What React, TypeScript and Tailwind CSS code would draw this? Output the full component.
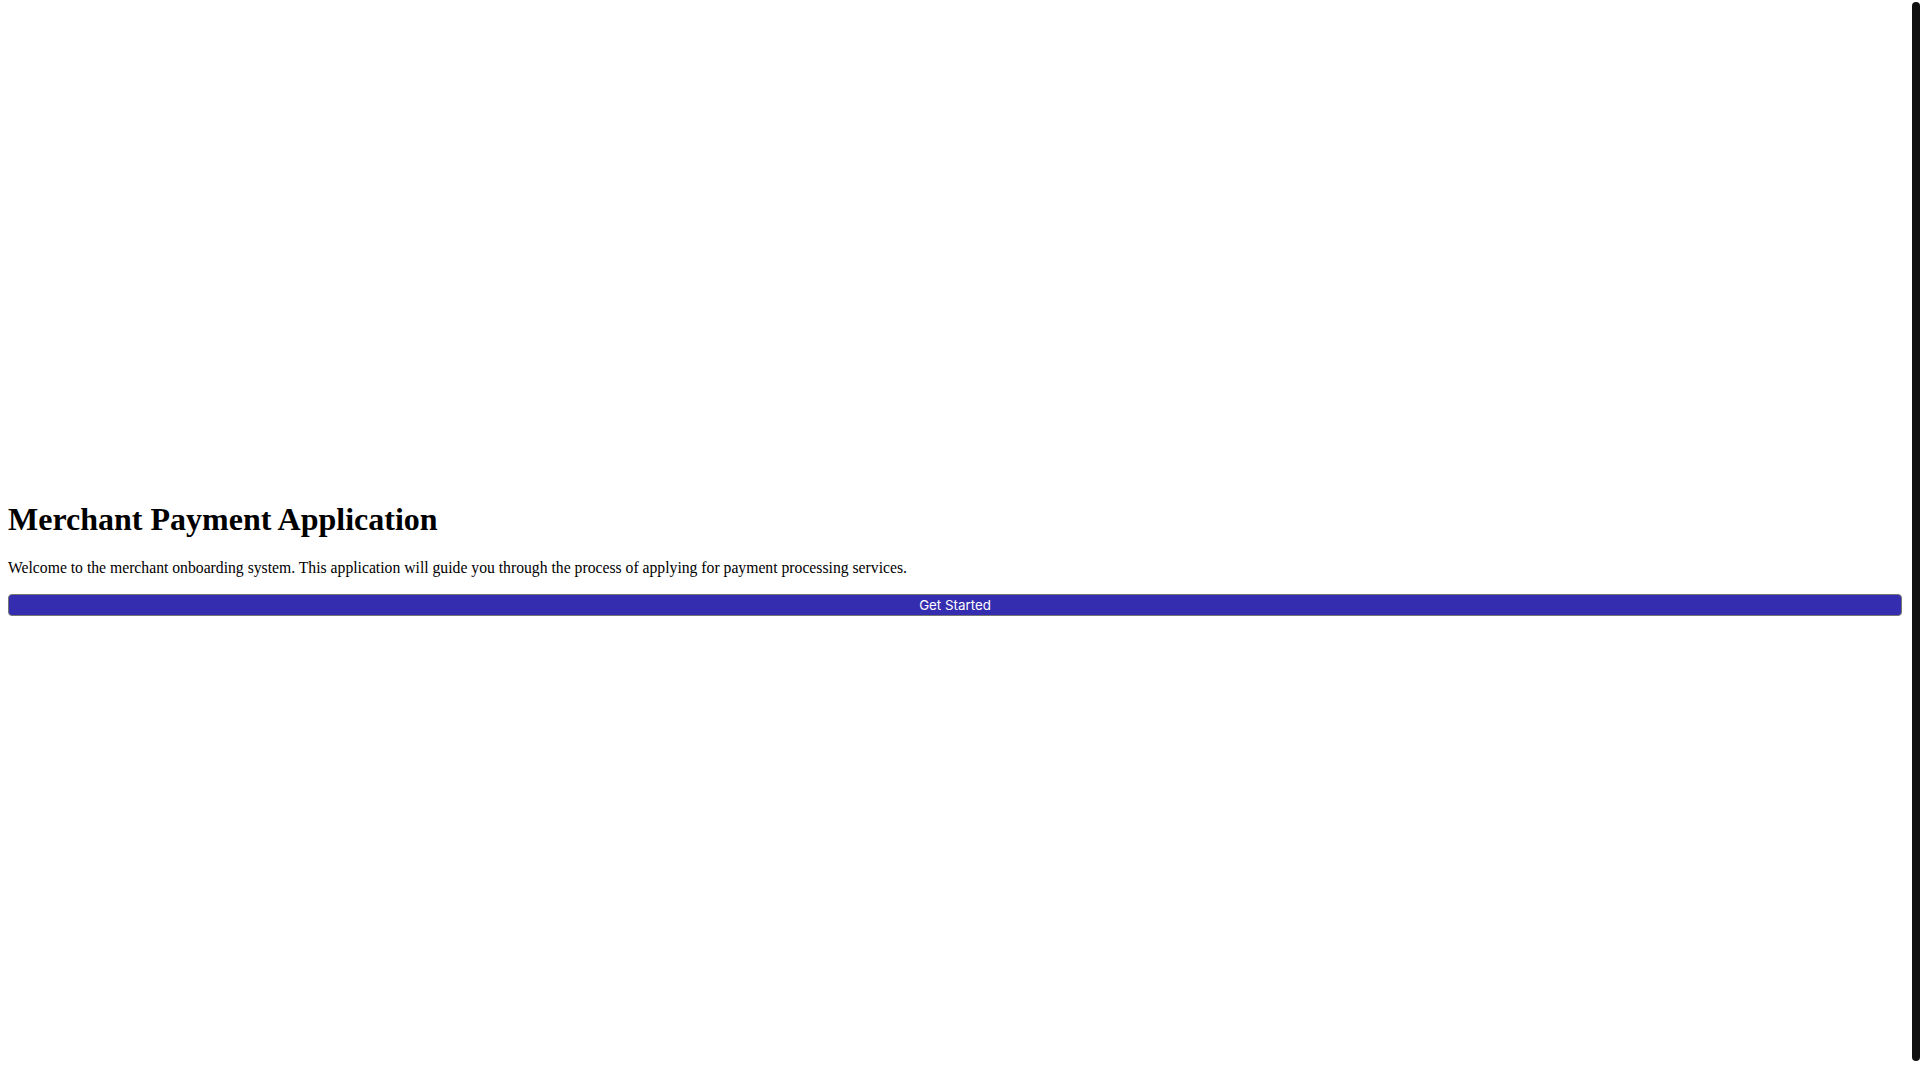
export default function App() {
  return (
    <div className="flex h-screen overflow-hidden bg-white">
      <main className="flex min-w-0 flex-1 flex-col justify-center px-2 pt-4 font-['Liberation_Serif',serif] text-black">
        <div>
          <h1 className="my-[21.44px] text-[32px] font-bold leading-[normal]">Merchant Payment Application</h1>
          <p className="my-4 text-[15.7px] leading-[normal]">
            Welcome to the merchant onboarding system. This application will guide you through the process of applying
            for payment processing services.
          </p>
          <button
            type="button"
            className="w-full rounded-[4px] border border-[#767676] bg-[#352db0] py-[2px] font-['Inter',sans-serif] text-[13.33px] leading-[normal] text-white"
          >
            Get Started
          </button>
        </div>
      </main>
      {/* page scroll rail */}
      <div className="flex w-[10px] shrink-0 justify-end pt-[2px]">
        <div className="h-[1059px] w-[8px] rounded-full bg-[#111111]" />
      </div>
    </div>
  );
}
